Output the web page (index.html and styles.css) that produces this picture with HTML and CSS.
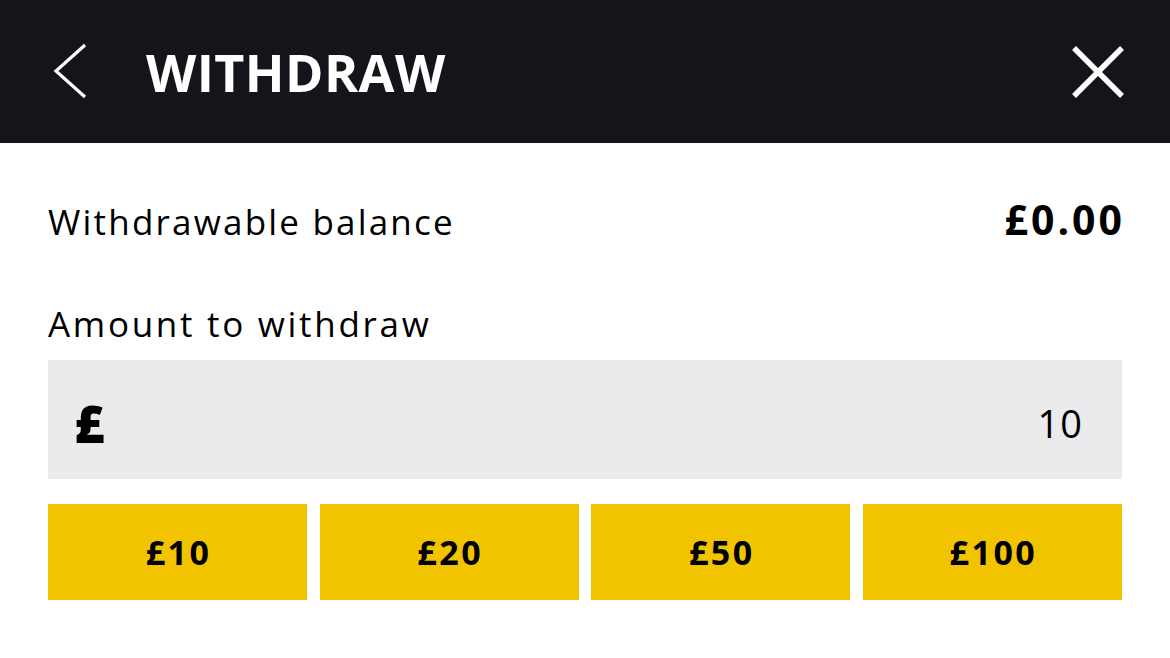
FILE: index.html
```html
<!DOCTYPE html>
<html>
<head>
<meta charset="utf-8">
<link rel="stylesheet" href="styles.css">
</head>
<body>
<header class="bar">
  <button class="icon-btn back" aria-label="Back">
    <svg width="40" height="60" viewBox="0 0 40 60"><polyline points="33,3 4,29 33,55" fill="none" stroke="#fff" stroke-width="3.2"/></svg>
  </button>
  <h1 class="title">WITHDRAW</h1>
  <button class="icon-btn close" aria-label="Close">
    <svg width="56" height="56" viewBox="0 0 56 56"><path d="M4 4 L52 52 M52 4 L4 52" fill="none" stroke="#fff" stroke-width="5.5"/></svg>
  </button>
</header>
<main class="content">
  <div class="balance-row">
    <span class="label">Withdrawable balance</span>
    <span class="balance">£0.00</span>
  </div>
  <div class="amount-label">Amount to withdraw</div>
  <div class="input">
    <span class="currency">£</span>
    <span class="value">10</span>
  </div>
  <div class="quick">
    <button class="chip">£10</button>
    <button class="chip">£20</button>
    <button class="chip">£50</button>
    <button class="chip">£100</button>
  </div>
</main>
</body>
</html>
```
FILE: styles.css
```css
* { box-sizing: border-box; }
body {
  margin: 0;
  background: #fff;
  font-family: "Open Sans", "DejaVu Sans", sans-serif;
  color: #000;
}
.bar {
  height: 143px;
  background: #14151a;
  display: flex;
  align-items: center;
  padding: 0 44px 0 52px;
}
.icon-btn {
  background: none;
  border: 0;
  padding: 0;
  display: flex;
}
.title {
  margin: 0 0 0 54px;
  color: #fff;
  font-size: 52px;
  font-weight: 700;
  letter-spacing: 0.4px;
  flex: 1;
}
.content { padding: 0 48px; }
.balance-row {
  display: flex;
  justify-content: space-between;
  align-items: baseline;
  margin-top: 48px;
  height: 46px;
}
.label { font-size: 35px; font-weight: 400; letter-spacing: 2.2px; }
.balance { font-size: 41px; font-weight: 700; letter-spacing: 3px; margin-right: -3px; }
.amount-label {
  font-size: 35px;
  letter-spacing: 2.7px;
  margin-top: 63px;
  height: 50px;
}
.input {
  margin-top: 10px;
  height: 119px;
  background: #ebebed;
  display: flex;
  justify-content: space-between;
  align-items: center;
  padding: 6px 40px 0 26px;
}
.currency { font-size: 52px; font-weight: 800; }
.value { font-size: 38px; letter-spacing: 1px; margin-right: -1px; }
.quick {
  margin-top: 25px;
  display: grid;
  grid-template-columns: repeat(4, 1fr);
  gap: 12.5px;
}
.chip {
  height: 96px;
  border: 0;
  background: #f2c400;
  font-family: inherit;
  font-size: 34px;
  font-weight: 700;
  letter-spacing: 2.5px;
  text-indent: 2px;
  color: #000;
}
```
